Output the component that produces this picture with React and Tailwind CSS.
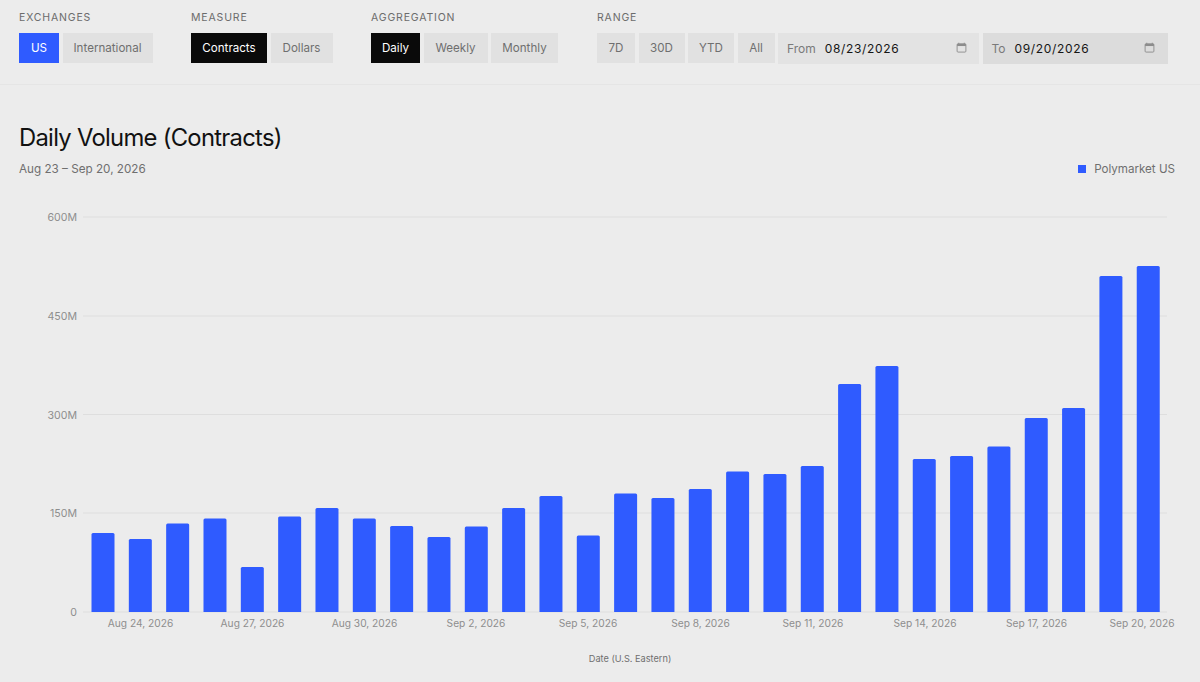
import React from 'react';

const TOPS = [533, 539, 523.5, 518.5, 567, 516.5, 508, 518.5, 526, 537, 526.5, 508, 496, 535.5, 493.5, 498, 489, 471.5, 474, 466, 384, 366, 459, 456, 446.5, 418, 408, 276, 266];
const GRID = [{ y: 217, label: '600M' }, { y: 316, label: '450M' }, { y: 414.5, label: '300M' }, { y: 513, label: '150M' }, { y: 612, label: '0' }];
const TICKS = [
    { x: 140.5, label: 'Aug 24, 2026' },
    { x: 252.5, label: 'Aug 27, 2026' },
    { x: 364.5, label: 'Aug 30, 2026' },
    { x: 476, label: 'Sep 2, 2026' },
    { x: 588, label: 'Sep 5, 2026' },
    { x: 700.5, label: 'Sep 8, 2026' },
    { x: 813, label: 'Sep 11, 2026' },
    { x: 925, label: 'Sep 14, 2026' },
    { x: 1036.5, label: 'Sep 17, 2026' },
    { x: 1142, label: 'Sep 20, 2026' },
];

function Btn({ label, active, blue, w }) {
    const tone = blue ? 'bg-[#2f5bff] text-white' : active ? 'bg-[#0a0a0a] text-white' : 'bg-[#e1e1e1] text-[#6f6f6f]';
    return <button className={`h-[30px] pt-px flex items-center justify-center text-[11.6px] ${tone} ${w}`}>{label}</button>;
}

function Group({ title, children, className }) {
    return (
        <div className={className}>
            <div className="text-[10.5px] leading-[14px] tracking-[0.08em] text-[#6b6b6b] mb-[8px] uppercase">{title}</div>
            <div className="flex gap-[3.5px]">{children}</div>
        </div>
    );
}

function CalendarIcon() {
    return (
        <svg width="11" height="11" viewBox="0 0 12 12" className="text-[#8c8c8c]">
            <path d="M3 .8v1.4M9 .8v1.4" stroke="currentColor" strokeWidth="1" />
            <rect x="1.2" y="2" width="9.6" height="9" rx="1" fill="none" stroke="currentColor" strokeWidth="1" />
            <rect x="1.2" y="2" width="9.6" height="2.4" fill="currentColor" />
        </svg>
    );
}

function DateBox({ label, value, w, bg }) {
    return (
        <div className={`h-[31px] flex items-center pl-[9px] pr-[12.5px] text-[12px] ${w} ${bg}`}>
            <span className="text-[#7a7a7a] mr-[9px] pt-px">{label}</span>
            <span className="text-[#161616] tracking-[0.055em] pt-px">{value}</span>
            <span className="ml-auto flex pb-[2px]"><CalendarIcon /></span>
        </div>
    );
}

function Chart() {
    return (
        <svg width="1200" height="510" viewBox="0 172 1200 510" className="block" style={{ fontFamily: 'Inter, sans-serif' }}>
            {GRID.map(g => (
                <g key={g.label}>
                    <line x1="83" x2="1167" y1={g.y} y2={g.y} stroke="#dedede" strokeWidth="1" />
                    <text x="77" y={g.y + 4} textAnchor="end" fontSize="10.6" fill="#8e8e8e">{g.label}</text>
                </g>
            ))}
            {TOPS.map((top, i) => (
                <path
                    key={i}
                    d={`M${91.5 + i * 37.33} 612V${top + 1.5}q0 -1.5 1.5 -1.5h20q1.5 0 1.5 1.5V612z`}
                    fill="#2f5bff"
                />
            ))}
            {TICKS.map(t => (
                <text key={t.label} x={t.x} y="627" textAnchor="middle" fontSize="10.2" fill="#8e8e8e">{t.label}</text>
            ))}
            <text x="630" y="661.5" textAnchor="middle" fontSize="9.2" fill="#6f6f6f">Date (U.S. Eastern)</text>
        </svg>
    );
}

export default function App() {
    return (
        <div className="w-[1200px] h-[682px] overflow-hidden bg-[#ececec]" style={{ fontFamily: 'Inter, sans-serif' }}>
            {/* Filters */}
            <div className="h-[85px] border-b border-[#e5e5e5] pt-[11px] pl-[19px] flex">
                <Group title="Exchanges" className="w-[172px]">
                    <Btn label="US" blue w="w-[40px]" />
                    <Btn label="International" w="w-[90px]" />
                </Group>
                <Group title="Measure" className="w-[180px]">
                    <Btn label="Contracts" active w="w-[76px]" />
                    <Btn label="Dollars" w="w-[62px]" />
                </Group>
                <Group title="Aggregation" className="w-[226px]">
                    <Btn label="Daily" active w="w-[49px]" />
                    <Btn label="Weekly" w="w-[64px]" />
                    <Btn label="Monthly" w="w-[67px]" />
                </Group>
                <Group title="Range">
                    <Btn label="7D" w="w-[38px]" />
                    <Btn label="30D" w="w-[46px]" />
                    <Btn label="YTD" w="w-[46px]" />
                    <Btn label="All" w="w-[37px]" />
                    <DateBox label="From" value="08/23/2026" w="w-[201px]" bg="bg-[#e3e3e3]" />
                    <DateBox label="To" value="09/20/2026" w="w-[185px]" bg="bg-[#dcdcdc]" />
                </Group>
            </div>

            {/* Title */}
            <div className="h-[87px] pl-[19px] pr-[25px] pt-[38px]">
                <h1 className="text-[23.8px] leading-[30px] text-[#111111] tracking-[-0.03em]">Daily Volume (Contracts)</h1>
                <div className="flex items-center justify-between mt-[8px]">
                    <span className="text-[11.7px] leading-[16px] text-[#6f6f6f]">Aug 23 – Sep 20, 2026</span>
                    <span className="flex items-center gap-[8px] text-[11.6px] leading-[16px] text-[#6f6f6f]">
                        <span className="w-[8px] h-[8px] bg-[#2f5bff]" />
                        Polymarket US
                    </span>
                </div>
            </div>

            <Chart />
        </div>
    );
}
